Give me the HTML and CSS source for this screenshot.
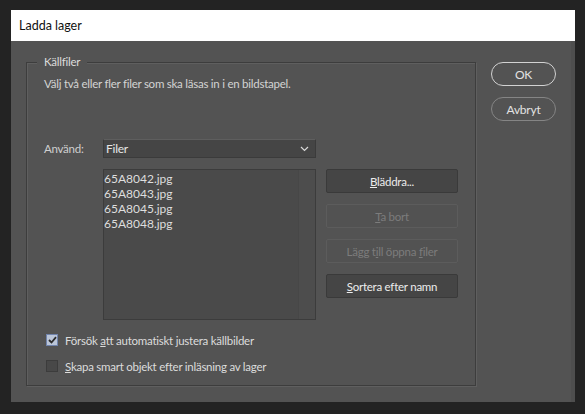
FILE: index.html
```html
<!DOCTYPE html>
<html lang="sv">
<head>
<meta charset="utf-8">
<link rel="stylesheet" href="styles.css">
</head>
<body>
<div class="dialog">
  <div class="titlebar">Ladda lager</div>
  <div class="content">
    <div class="group">
      <span class="legend">Källfiler</span>
      <div class="desc">Välj två eller fler filer som ska läsas in i en bildstapel.</div>
      <div class="userow">
        <span class="uselabel">Använd:</span>
        <div class="select">
          <span>Filer</span>
          <svg class="chev" width="9" height="6" viewBox="0 0 9 6"><polyline points="1,1 4.5,4.5 8,1" fill="none" stroke="#d8d8d8" stroke-width="1.2"/></svg>
        </div>
      </div>
      <div class="filerow">
        <div class="list">
          <div class="items">
            <div>65A8042.jpg</div>
            <div>65A8043.jpg</div>
            <div>65A8045.jpg</div>
            <div>65A8048.jpg</div>
          </div>
          <div class="scrollcol"></div>
        </div>
        <div class="btncol">
          <div class="btn"><span><u>B</u>läddra...</span></div>
          <div class="btn disabled"><span><u>T</u>a bort</span></div>
          <div class="btn disabled"><span>Lägg t<u>i</u>ll öppna <u>f</u>iler</span></div>
          <div class="btn"><span><u>S</u>ortera efter namn</span></div>
        </div>
      </div>
      <div class="check first">
        <span class="box checked"><svg width="9" height="8" viewBox="0 0 9 8"><polyline points="1,4 3.5,6.5 8,1.2" fill="none" stroke="#2b2b2b" stroke-width="1.8"/></svg></span>
        <span>Försök <u>a</u>tt automatiskt justera källbilder</span>
      </div>
      <div class="check second">
        <span class="box"></span>
        <span><u>S</u>kapa smart objekt efter inläsning av lager</span>
      </div>
    </div>
    <div class="side">
      <div class="pill ok"><span>OK</span></div>
      <div class="pill cancel"><span>Avbryt</span></div>
    </div>
  </div>
</div>
</body>
</html>
```
FILE: styles.css
```css
* { box-sizing: border-box; }
html, body { margin: 0; padding: 0; }
body {
  background: #232323;
  width: 585px;
  height: 414px;
  overflow: hidden;
  font-family: Lato, "Liberation Sans", sans-serif;
  font-size: 11.5px;
  letter-spacing: -0.25px;
  color: #d4d4d4;
}
.dialog {
  margin: 10px 0 0 11px;
  width: 564px;
  height: 392px;
  display: flex;
  flex-direction: column;
}
.titlebar {
  height: 31px;
  background: #ffffff;
  color: #111;
  font-size: 12.5px;
  letter-spacing: 0;
  padding-left: 8px;
  line-height: 31px;
}
.content {
  flex: 1;
  background: #535353;
  display: flex;
  align-items: flex-start;
  padding: 21px 0 0 15px;
  gap: 15px;
  border-right: 4px solid #4e4e4e;
}
.group {
  position: relative;
  width: 450px;
  height: 324px;
  border: 1px solid #3d3d3d;
  box-shadow: inset 1px 1px 0 #5f5f5f, 1px 1px 0 #5f5f5f;
  padding: 13px 0 0 17px;
}
.legend {
  position: absolute;
  left: 10px;
  top: -9px;
  background: #535353;
  padding: 0 7px;
  line-height: 16px;
  color: #dcdcdc;
}
.desc {
  line-height: 16px;
  height: 16px;
}
.userow {
  margin-top: 47px;
  display: flex;
  align-items: center;
  height: 19px;
}
.uselabel {
  width: 59px;
  color: #d0d0d0;
}
.select {
  width: 213px;
  height: 19px;
  background: #454545;
  border: 1px solid #3b3b3b;
  border-top-color: #5e5e5e;
  display: flex;
  align-items: center;
  justify-content: space-between;
  padding: 0 6px 0 2px;
  color: #e6e6e6;
  font-size: 12px;
}
.chev { display: block; }
.filerow {
  margin-top: 11px;
  display: flex;
  gap: 10px;
  padding-left: 59px;
}
.list {
  width: 213px;
  height: 151px;
  background: #4a4a4a;
  border: 1px solid #3c3c3c;
  display: flex;
  justify-content: space-between;
}
.items {
  padding: 1px 0 0 0;
  line-height: 15px;
  font-size: 12px;
  letter-spacing: 0;
  color: #dedede;
}
.scrollcol {
  width: 17px;
  height: 100%;
  background: #4d4d4d;
  border-left: 1px solid #474747;
}
.btncol {
  display: flex;
  flex-direction: column;
  gap: 11px;
}
.btn {
  width: 132px;
  height: 24px;
  background: #454545;
  border: 1px solid #3a3a3a;
  border-radius: 2px;
  display: flex;
  align-items: center;
  justify-content: center;
  color: #ececec;
}
.btn.disabled {
  background: #525252;
  border-color: #5c5c5c;
  color: #7c7c7c;
}
.check {
  display: flex;
  align-items: center;
  height: 18px;
  gap: 7px;
  padding-left: 2px;
  color: #dcdcdc;
}
.check.first { margin-top: 11px; }
.check.second { margin-top: 8px; }
.box {
  width: 12px;
  height: 12px;
  background: #484848;
  border: 1px solid #3c3c3c;
  display: flex;
  align-items: center;
  justify-content: center;
}
.box.checked {
  background: #bac5d8;
  border-color: #7083ab;
}
.side {
  display: flex;
  flex-direction: column;
  gap: 11px;
}
.pill {
  width: 65px;
  height: 24px;
  border-radius: 12px;
  display: flex;
  align-items: center;
  justify-content: center;
  color: #e2e2e2;
  font-size: 12px;
}
.pill.ok { border: 1.5px solid #d2d2d2; }
.pill.cancel { border: 1.5px solid #858585; }
```
